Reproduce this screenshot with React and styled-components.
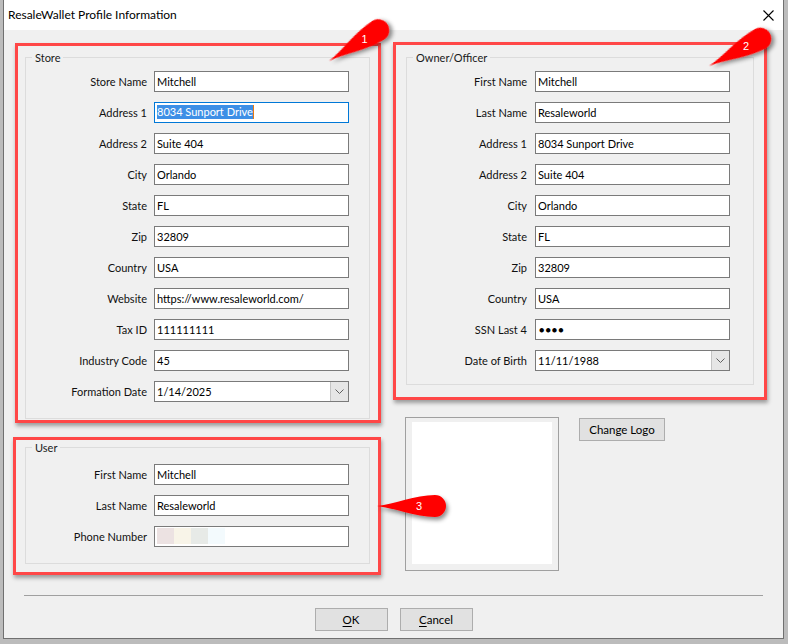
import styled, { createGlobalStyle } from "styled-components";

const GlobalStyle = createGlobalStyle`
  html, body { margin: 0; padding: 0; background: #bcbcbc; }
  body { font-family: Lato, "Noto Sans", "Liberation Sans", sans-serif; font-size: 11px; color: #000; }
`;

const Screen = styled.div`
  position: relative;
  width: 788px;
  height: 644px;
  overflow: hidden;
  background: #bcbcbc;
`;

const Window = styled.div`
  margin-left: 3px;
  width: 781px;
  height: 639px;
  box-sizing: border-box;
  border: 1px solid #707070;
  border-top: none;
  display: flex;
  flex-direction: column;
  background: #f0f0f0;
`;

const TitleBar = styled.div`
  height: 30px;
  background: #fff;
  display: flex;
  align-items: center;
  justify-content: space-between;
  padding-left: 4px;
`;

const Title = styled.span`
  font-size: 12px;
  color: #000;
  padding-bottom: 1px;
`;

const CloseBtn = styled.div`
  width: 30px;
  height: 30px;
  display: flex;
  align-items: center;
  justify-content: center;
`;

const Body = styled.div`
  flex: 1;
  display: flex;
  flex-direction: column;
  padding-top: 12px;
`;

const Columns = styled.div`
  display: flex;
  align-items: flex-start;
`;

const LeftCol = styled.div`
  margin-left: 9px;
  width: 368px;
  display: flex;
  flex-direction: column;
  align-items: flex-end;
  gap: 14px;
`;

const RightCol = styled.div`
  margin-left: 12px;
  width: 374px;
  display: flex;
  flex-direction: column;
`;

const Callout = styled.div`
  box-sizing: border-box;
  width: ${(p) => p.$w}px;
  margin-top: ${(p) => p.$mt || 0}px;
  padding: ${(p) => p.$pad};
  border: 3px solid #ff4747;
  box-shadow: 1px 3px 4px rgba(0, 0, 0, 0.35);
`;

const GroupBox = styled.div`
  position: relative;
  border: 1px solid #dcdcdc;
`;

const Legend = styled.span`
  position: absolute;
  top: -8px;
  left: 6px;
  padding: 0 3px;
  line-height: 15px;
  background: #f0f0f0;
  color: #1a1a1a;
`;

const Form = styled.div`
  display: grid;
  grid-template-columns: ${(p) => p.$lw}px 195px;
  column-gap: ${(p) => p.$gap}px;
  row-gap: 10px;
  align-items: center;
  padding: ${(p) => p.$pad};
`;

const Label = styled.div`
  text-align: right;
  white-space: nowrap;
  color: #111;
  padding-bottom: 1px;
`;

const Field = styled.div`
  box-sizing: border-box;
  height: 21px;
  border: 1px solid ${(p) => (p.$focus ? "#0078d7" : "#7a7a7a")};
  background: #fff;
  display: flex;
  align-items: center;
  padding: 0 0 1px 2px;
  white-space: nowrap;
  overflow: hidden;
`;

const Selected = styled.span`
  background: #3d8fe6;
  color: #fff;
  line-height: 14px;
  border-right: 1px solid #e87a10;
`;

const Dots = styled.span`
  font-size: 9px;
  letter-spacing: 1px;
  padding-left: 1px;
`;

const Blot = styled.span`
  width: 17px;
  height: 16px;
  background: ${(p) => p.$c};
`;

const DropBtn = styled.div`
  margin-left: auto;
  width: 17px;
  align-self: stretch;
  margin-bottom: -1px;
  background: #e6e6e6;
  border-left: 1px solid #c4c4c4;
  display: flex;
  align-items: center;
  justify-content: center;
`;

const LogoRow = styled.div`
  display: flex;
  align-items: flex-start;
  margin-top: 17px;
  margin-left: 12px;
`;

const LogoFrame = styled.div`
  box-sizing: border-box;
  width: 154px;
  height: 154px;
  border: 1px solid #a0a0a0;
  padding: 4px 6px 6px 6px;
`;

const LogoImage = styled.div`
  width: 100%;
  height: 100%;
  background: #fff;
`;

const Button = styled.button`
  box-sizing: border-box;
  width: ${(p) => p.$w}px;
  height: 23px;
  margin: ${(p) => p.$m || 0};
  padding: 0;
  background: #e1e1e1;
  border: 1px solid #adadad;
  font-family: inherit;
  font-size: 11.5px;
  color: #000;
  u { text-decoration: underline; text-underline-offset: 2px; }
`;

const Separator = styled.div`
  margin: 20px 0 0 20px;
  width: 739px;
  height: 1px;
  background: #a0a0a0;
`;

const ButtonRow = styled.div`
  display: flex;
  justify-content: center;
  gap: 12px;
  margin-top: 12px;
`;

const Overlay = styled.svg`
  position: absolute;
  left: 0;
  top: 0;
  pointer-events: none;
`;

const Chevron = () => (
  <svg width="9" height="5" viewBox="0 0 9 5">
    <polyline points="0.5,0.5 4.5,4.5 8.5,0.5" fill="none" stroke="#606060" strokeWidth="1" />
  </svg>
);

const Input = ({ children, focus, date }) => (
  <Field $focus={focus}>
    {children}
    {date && (
      <DropBtn>
        <Chevron />
      </DropBtn>
    )}
  </Field>
);

const storeRows = [
  ["Store Name", "Mitchell"],
  ["Address 1", "8034 Sunport Drive", "focus"],
  ["Address 2", "Suite 404"],
  ["City", "Orlando"],
  ["State", "FL"],
  ["Zip", "32809"],
  ["Country", "USA"],
  ["Website", "https://www.resaleworld.com/"],
  ["Tax ID", "111111111"],
  ["Industry Code", "45"],
  ["Formation Date", "1/14/2025", "date"],
];

const ownerRows = [
  ["First Name", "Mitchell"],
  ["Last Name", "Resaleworld"],
  ["Address 1", "8034 Sunport Drive"],
  ["Address 2", "Suite 404"],
  ["City", "Orlando"],
  ["State", "FL"],
  ["Zip", "32809"],
  ["Country", "USA"],
  ["SSN Last 4", "●●●●", "dots"],
  ["Date of Birth", "11/11/1988", "date"],
];

const renderRows = (rows) =>
  rows.map(([label, value, kind]) => [
    <Label key={label + "l"}>{label}</Label>,
    <Input key={label + "v"} focus={kind === "focus"} date={kind === "date"}>
      {kind === "focus" ? <Selected>{value}</Selected> : kind === "dots" ? <Dots>{value}</Dots> : value}
    </Input>,
  ]);

const drop = "M0 0 C18 -2 38 -11 58 -11 A11 11 0 0 1 58 11 C38 11 18 2 0 0 Z";

const Badge = ({ x, y, angle, n }) => {
  const rad = (angle * Math.PI) / 180;
  const tx = x + Math.cos(rad) * 42;
  const ty = y + Math.sin(rad) * 42;
  return (
    <g>
      <path d={drop} transform={`translate(${x} ${y}) rotate(${angle})`} fill="#ff0000" filter="url(#shadow)" />
      <text x={tx} y={ty + 4} textAnchor="middle" fill="#fff" fontSize="11" fontFamily="Liberation Sans, sans-serif">
        {n}
      </text>
    </g>
  );
};

export default function App() {
  return (
    <Screen>
      <GlobalStyle />
      <Window>
        <TitleBar>
          <Title>ResaleWallet Profile Information</Title>
          <CloseBtn>
            <svg width="11" height="11" viewBox="0 0 11 11">
              <path d="M0.5 0.5 L10.5 10.5 M10.5 0.5 L0.5 10.5" stroke="#000" strokeWidth="1.1" />
            </svg>
          </CloseBtn>
        </TitleBar>
        <Body>
          <Columns>
            <LeftCol>
              <Callout $w={366} $mt={1} $pad="11px 8px 1px 7px">
                <GroupBox>
                  <Legend>Store</Legend>
                  <Form $lw={115} $gap={7} $pad="13px 0 16px 6px">
                    {renderRows(storeRows)}
                  </Form>
                </GroupBox>
              </Callout>
              <Callout $w={368} $pad="7px 8px 8px 9px">
                <GroupBox>
                  <Legend>User</Legend>
                  <Form $lw={115} $gap={7} $pad="16px 0 16px 6px">
                    <Label>First Name</Label>
                    <Input>Mitchell</Input>
                    <Label>Last Name</Label>
                    <Input>Resaleworld</Input>
                    <Label>Phone Number</Label>
                    <Input>
                      <Blot $c="#ece2e2" />
                      <Blot $c="#f8f4e8" />
                      <Blot $c="#e7eae7" />
                      <Blot $c="#f3fafd" />
                    </Input>
                  </Form>
                </GroupBox>
              </Callout>
            </LeftCol>
            <RightCol>
              <Callout $w={374} $pad="12px 10px 12px 10px">
                <GroupBox>
                  <Legend>Owner/Officer</Legend>
                  <Form $lw={115} $gap={8} $pad="13px 0 13px 5px">
                    {renderRows(ownerRows)}
                  </Form>
                </GroupBox>
              </Callout>
              <LogoRow>
                <LogoFrame>
                  <LogoImage />
                </LogoFrame>
                <Button $w={86} $m="1px 0 0 20px">Change Logo</Button>
              </LogoRow>
            </RightCol>
          </Columns>
          <Separator />
          <ButtonRow>
            <Button $w={73}>
              <u>O</u>K
            </Button>
            <Button $w={73}>
              <u>C</u>ancel
            </Button>
          </ButtonRow>
        </Body>
      </Window>
      <Overlay width="788" height="644" viewBox="0 0 788 644">
        <defs>
          <filter id="shadow" x="-20%" y="-50%" width="150%" height="220%">
            <feDropShadow dx="2" dy="3" stdDeviation="2" floodColor="#000" floodOpacity="0.45" />
          </filter>
        </defs>
        <Badge x={329} y={61} angle={-32} n="1" />
        <Badge x={709} y={66} angle={-28} n="2" />
        <Badge x={377} y={506} angle={0} n="3" />
      </Overlay>
    </Screen>
  );
}
